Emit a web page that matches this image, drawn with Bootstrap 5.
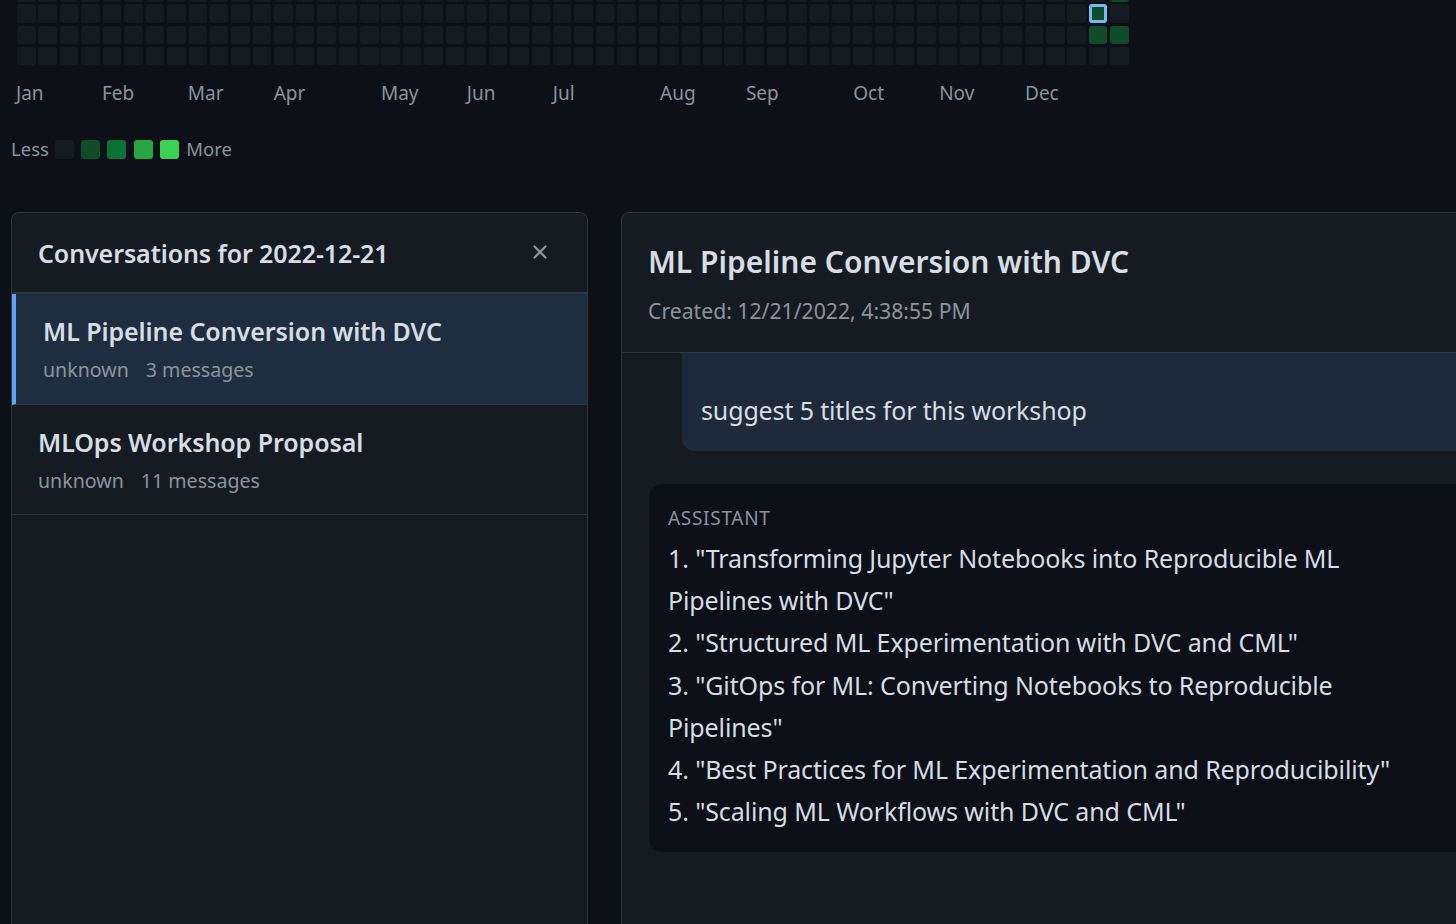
<!DOCTYPE html>
<html lang="en">
<head>
<meta charset="utf-8">
<title>Conversations</title>
<link href="https://cdn.jsdelivr.net/npm/bootstrap@5.3.0/dist/css/bootstrap.min.css" rel="stylesheet">
<style>
html,body{height:100%;}
body{background:#0d1117;color:#c9d1d9;font-family:"Noto Sans","Open Sans","Liberation Sans",sans-serif;overflow:hidden;}
.pagewrap{height:924px;width:1456px;overflow:hidden;padding-left:11px;}
.heatgrid{display:grid;grid-template-columns:repeat(52,18.5px);column-gap:2.95px;row-gap:2.8px;grid-auto-rows:18.5px;margin-left:6px;margin-top:-17px;}
.hcell{background:#161b22;border-radius:3px;}
.hcell.g1{background:#0f4d2a;}
.hcell.sel{outline:3px solid #7ab8f5;outline-offset:-3px;background:#0f4d2a;}
.monthrow{display:grid;grid-template-columns:repeat(52,18.5px);column-gap:2.97px;margin-left:5px;margin-top:16px;height:24px;font-size:19px;line-height:24px;color:#8b949e;}
.monthrow span{white-space:nowrap;width:0;}
.legendrow{margin-top:31px;height:26px;font-size:18.5px;line-height:26px;color:#8b949e;}
.lesslabel{margin-right:6px;}
.lbox{width:19px;height:19px;border-radius:3px;margin-right:7.3px;}
.lbox.l0{background:#161b22;}.lbox.l1{background:#0f4d2a;}.lbox.l2{background:#0b7235;}.lbox.l3{background:#26a641;}.lbox.l4{background:#39d353;}
.panelrow{margin-top:50px;gap:33px;width:1600px;}
.leftpanel,.rightpanel{background:#161b22;border:1px solid #30363d;border-radius:8px 8px 0 0;height:800px;color:#c9d1d9;--bs-card-bg:#161b22;}
.leftpanel{width:577px;flex:none;}
.rightpanel{width:900px;flex:none;}
.lefthead{height:80px;padding:0 26px;border-bottom:1px solid #30363d;}
.lefttitle{font-size:25px;font-weight:600;letter-spacing:-.1px;margin:0;color:#d6dde5;}
.closer{background:none;border:0;padding:0;line-height:0;color:#8b949e;margin-right:14px;margin-top:-2px;}
.list-group-flush .convitem,.list-group-flush .convitem:last-child{height:110.5px;padding:20px 26px 0;background:#161b22;border:0;border-bottom:1px solid #30363d;border-radius:0;color:#d6dde5;}
.list-group-flush .convitem.activeconv{background:#1f2d40;border-left:4px solid #58a6ff;padding-left:27px;}
.convname{font-size:25px;font-weight:600;line-height:34px;letter-spacing:-.07px;}
.convmeta{font-size:19.6px;line-height:30px;color:#8b949e;margin-top:7px;}
.convmeta span+span{margin-left:17px;}
.righthead{height:140px;padding:26px 26px 0;border-bottom:1px solid #30363d;}
.righttitle{font-size:30px;font-weight:600;line-height:46px;margin:0;color:#d6dde5;}
.createdline{font-size:21.2px;line-height:30px;color:#8b949e;margin-top:11px;}
.msgscroll{padding:0 27px;overflow:hidden;}
.usermsg{margin-left:33px;background:#1e2a3a;border-radius:0 0 0 13px;padding:38px 19px 20px;font-size:25px;letter-spacing:-.14px;line-height:38px;color:#d6dde5;height:98px;}
.assistmsg{margin-top:33px;background:#0d1117;border-radius:13px;padding:19px;height:368px;}
.rolelabel{font-size:19px;line-height:30px;letter-spacing:.7px;color:#8b949e;}
.assisttext{font-size:25px;letter-spacing:-.12px;line-height:42.2px;color:#d6dde5;margin-top:3.6px;}
</style>
</head>
<body>
<div class="pagewrap">
  <div class="heatgrid" id="heat"></div>
  <div class="monthrow" id="months"></div>
  <div class="legendrow d-flex align-items-center">
    <span class="lesslabel">Less</span>
    <div class="lbox l0"></div><div class="lbox l1"></div><div class="lbox l2"></div><div class="lbox l3"></div><div class="lbox l4"></div>
    <span>More</span>
  </div>
  <div class="panelrow d-flex align-items-start">
    <div class="card leftpanel">
      <div class="lefthead d-flex align-items-center justify-content-between">
        <h2 class="lefttitle">Conversations for 2022-12-21</h2>
        <button class="closer" type="button" aria-label="Close"><svg width="14" height="14" viewBox="0 0 14 14"><path d="M1.5 1.5l11 11M12.5 1.5l-11 11" stroke="currentColor" stroke-width="2.4" stroke-linecap="round"/></svg></button>
      </div>
      <div class="list-group list-group-flush">
        <div class="list-group-item convitem activeconv">
          <div class="convname">ML Pipeline Conversion with DVC</div>
          <div class="convmeta"><span>unknown</span><span>3 messages</span></div>
        </div>
        <div class="list-group-item convitem">
          <div class="convname">MLOps Workshop Proposal</div>
          <div class="convmeta"><span>unknown</span><span>11 messages</span></div>
        </div>
      </div>
    </div>
    <div class="card rightpanel">
      <div class="righthead">
        <h1 class="righttitle">ML Pipeline Conversion with DVC</h1>
        <div class="createdline">Created: 12/21/2022, 4:38:55 PM</div>
      </div>
      <div class="msgscroll">
        <div class="usermsg">suggest 5 titles for this workshop</div>
        <div class="assistmsg">
          <div class="rolelabel">ASSISTANT</div>
          <div class="assisttext">1. "Transforming Jupyter Notebooks into Reproducible ML<br>Pipelines with DVC"<br>2. "Structured ML Experimentation with DVC and CML"<br>3. "GitOps for ML: Converting Notebooks to Reproducible<br>Pipelines"<br>4. "Best Practices for ML Experimentation and Reproducibility"<br>5. "Scaling ML Workflows with DVC and CML"</div>
        </div>
      </div>
    </div>
  </div>
</div>
<script>
var heat=document.getElementById('heat'),html='';
for(var r=0;r<4;r++){for(var c=0;c<52;c++){var k='hcell';
 if(r==1&&c==50)k+=' sel';
 if((r==2&&(c==50||c==51))||(r==0&&c==51))k+=' g1';
 html+='<div class="'+k+'"></div>';}}
heat.innerHTML=html;
var m=[['Jan',0],['Feb',4],['Mar',8],['Apr',12],['May',17],['Jun',21],['Jul',25],['Aug',30],['Sep',34],['Oct',39],['Nov',43],['Dec',47]];
document.getElementById('months').innerHTML=m.map(function(x){return '<span style="grid-column-start:'+(x[1]+1)+'">'+x[0]+'</span>';}).join('');
</script>
<script src="https://cdn.jsdelivr.net/npm/bootstrap@5.3.0/dist/js/bootstrap.bundle.min.js"></script>
</body>
</html>
